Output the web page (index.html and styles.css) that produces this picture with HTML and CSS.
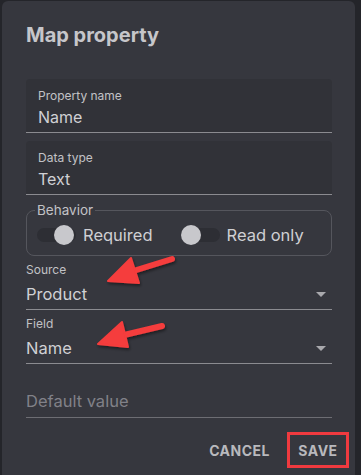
FILE: index.html
```html
<!DOCTYPE html>
<html>
<head>
	<title>Map property</title>
	<meta charset="utf-8">
	<meta name="viewport" content="width=device-width, initial-scale=1">
	<link rel="stylesheet" href="styles.css">
</head>
<body>
	<div class="dialog">
		<h1>Map property</h1>

		<div class="filled">
			<span class="label">Property name</span>
			<span class="value">Name</span>
		</div>
		<div class="filled">
			<span class="label">Data type</span>
			<span class="value">Text</span>
		</div>

		<fieldset class="behavior">
			<legend>Behavior</legend>
			<label class="switch">
				<span class="track"><span class="thumb thumb-right"></span></span>
				Required
			</label>
			<label class="switch">
				<span class="track"><span class="thumb"></span></span>
				Read only
			</label>
		</fieldset>

		<div class="select">
			<span class="label">Source</span>
			<div class="row">
				<span class="value">Product</span>
				<span class="caret"></span>
			</div>
		</div>
		<div class="select">
			<span class="label">Field</span>
			<div class="row">
				<span class="value">Name</span>
				<span class="caret"></span>
			</div>
		</div>

		<div class="plain">
			<span class="placeholder">Default value</span>
		</div>

		<div class="actions">
			<button class="btn">CANCEL</button>
			<button class="btn btn-save">SAVE</button>
		</div>
	</div>

	<!-- annotation arrows -->
	<svg class="arrows" width="361" height="475" viewBox="0 0 361 475">
		<defs>
			<filter id="sh" x="-20%" y="-20%" width="140%" height="140%">
				<feDropShadow dx="1" dy="2" stdDeviation="1.5" flood-color="#000" flood-opacity="0.45"/>
			</filter>
		</defs>
		<g fill="#f53c3c" stroke="#f53c3c" filter="url(#sh)">
			<line x1="172" y1="259" x2="130" y2="272" stroke-width="6" stroke-linecap="round"/>
			<polygon points="108,281 131,258 139,283" stroke-width="2" stroke-linejoin="round"/>
			<line x1="162" y1="326" x2="120" y2="336" stroke-width="6" stroke-linecap="round"/>
			<polygon points="98,344 122,322 128,347" stroke-width="2" stroke-linejoin="round"/>
		</g>
	</svg>
</body>
</html>
```

FILE: styles.css
```css
body {
	margin: 0;
	background-color: #24252a;
	font-family: Inter, "Noto Sans", sans-serif;
	color: #cfcfd3;
}

.dialog {
	margin: 1px 6px 0 2px;
	height: 480px;
	background-color: #36373e;
	border-radius: 6px;
	padding: 20px 23px 0 24px;
	box-sizing: border-box;
}

h1 {
	margin: 0 0 30px 0;
	font-size: 20px;
	line-height: 28px;
	font-weight: 700;
	color: #c6c6ca;
}

.filled {
	display: flex;
	flex-direction: column;
	height: 54px;
	padding: 10px 12px 0 12px;
	box-sizing: border-box;
	background-color: #313238;
	border-radius: 4px 4px 0 0;
	border-bottom: 1px solid #8b8b90;
	margin-bottom: 8px;
}

.label {
	display: block;
	font-size: 12px;
	line-height: 14px;
	color: #c2c2c6;
}

.value {
	font-size: 16px;
	line-height: 22px;
	color: #d0d0d4;
}

.filled .value {
	margin-top: 3px;
}

.behavior {
	margin: 4px 0 0 0;
	padding: 0 10px;
	height: 53px;
	box-sizing: border-box;
	border: 1px solid #55565d;
	border-radius: 8px;
	display: flex;
	align-items: center;
	gap: 28px;
}

.behavior legend {
	padding: 0 2px;
	margin-left: -2px;
	font-size: 13.5px;
	line-height: 14px;
	color: #c2c2c6;
}

.switch {
	display: flex;
	align-items: center;
	gap: 7px;
	font-size: 16.5px;
	color: #cfcfd3;
	margin-top: -3px;
}

.track {
	position: relative;
	display: block;
	width: 39px;
	height: 14px;
	border-radius: 7px;
	background-color: #2d2e34;
}

.thumb {
	position: absolute;
	top: -3px;
	left: 0;
	width: 20px;
	height: 20px;
	border-radius: 50%;
	background-color: #c8c8cc;
}

.thumb-right {
	left: 17px;
}

.select {
	margin-top: 7px;
	border-bottom: 1px solid #8b8b90;
}

.select .row {
	display: flex;
	align-items: center;
	justify-content: space-between;
	height: 30px;
	margin-top: 2px;
}

.select .value {
	font-size: 16.5px;
}

.caret {
	width: 0;
	height: 0;
	border-left: 5px solid transparent;
	border-right: 5px solid transparent;
	border-top: 5px solid #a9a9ad;
	margin-right: 6px;
}

.plain {
	margin-top: 26px;
	height: 27px;
	border-bottom: 1px solid #6d6d73;
}

.placeholder {
	display: block;
	font-size: 16.5px;
	line-height: 22px;
	color: #818188;
}

.actions {
	display: flex;
	justify-content: flex-end;
	gap: 6px;
	margin-top: 14px;
	margin-right: -17px;
}

.btn {
	background: none;
	border: 3px solid transparent;
	font-family: Inter, "Noto Sans", sans-serif;
	font-size: 14px;
	font-weight: 700;
	letter-spacing: 0.5px;
	color: #b9b9bd;
	padding: 0 8px;
	height: 36px;
}

.btn-save {
	border-color: #f03a3f;
	padding: 0 8px;
	width: 62px;
}

.arrows {
	position: absolute;
	left: 0;
	top: 0;
	pointer-events: none;
}
```
